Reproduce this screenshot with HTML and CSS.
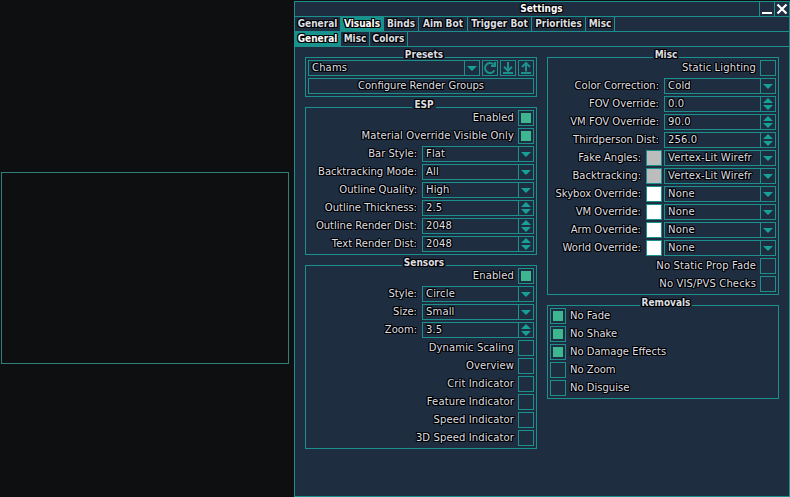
FILE: index.html
```
<!DOCTYPE html>
<html lang="en">
<head>
<meta charset="utf-8">
<title>Settings</title>
<link rel="stylesheet" href="styles.css">
</head>
<body>
<aside class="preview"><div class="preview-box"></div></aside>
<main class="window">
  <header class="titlebar">
    <h1 class="title">Settings</h1>
    <button class="win-btn"><svg viewBox="0 0 14 14"><path d="M2 11h10" stroke="#fff" stroke-width="2"/></svg></button>
    <button class="win-btn"><svg viewBox="0 0 14 14"><path d="M2.5 2.5l9 9M11.5 2.5l-9 9" stroke="#fff" stroke-width="2.2"/></svg></button>
  </header>
  <nav class="tabs main-tabs"><a>General</a><a class="active">Visuals</a><a>Binds</a><a>Aim Bot</a><a>Trigger Bot</a><a>Priorities</a><a>Misc</a></nav>
  <nav class="tabs sub-tabs"><a class="active">General</a><a>Misc</a><a>Colors</a></nav>
  <div class="columns">
    <div class="column">
      <section class="group">
        <h2>Presets</h2>
        <div class="row"><div class="field combo grow"><span>Chams</span><i></i></div>
          <button class="tool"><svg viewBox="0 0 14 14"><path d="M10.6 3.6A5 5 0 1 0 11.4 9.4M8 5h4V1" class="line"/></svg></button>
          <button class="tool"><svg viewBox="0 0 14 14"><path d="M7 1v8.500M3 5.800l4 4 4-4M2 12h10" class="line"/></svg></button>
          <button class="tool"><svg viewBox="0 0 14 14"><path d="M7 10.500V2M3 6l4-4 4 4M2 12h10" class="line"/></svg></button>
        </div>
        <button class="wide">Configure Render Groups</button>
      </section>
      <section class="group">
        <h2>ESP</h2>
        <div class="row toggle"><label>Enabled</label><b class="check on"></b></div>
        <div class="row toggle"><label>Material Override Visible Only</label><b class="check on"></b></div>
        <div class="row"><label>Bar Style:</label><div class="field combo"><span>Flat</span><i></i></div></div>
        <div class="row"><label>Backtracking Mode:</label><div class="field combo"><span>All</span><i></i></div></div>
        <div class="row"><label>Outline Quality:</label><div class="field combo"><span>High</span><i></i></div></div>
        <div class="row"><label>Outline Thickness:</label><div class="field spin"><span>2.5</span><i></i></div></div>
        <div class="row"><label>Outline Render Dist:</label><div class="field spin"><span>2048</span><i></i></div></div>
        <div class="row"><label>Text Render Dist:</label><div class="field spin"><span>2048</span><i></i></div></div>
      </section>
      <section class="group">
        <h2>Sensors</h2>
        <div class="row toggle"><label>Enabled</label><b class="check on"></b></div>
        <div class="row"><label>Style:</label><div class="field combo"><span>Circle</span><i></i></div></div>
        <div class="row"><label>Size:</label><div class="field combo"><span>Small</span><i></i></div></div>
        <div class="row"><label>Zoom:</label><div class="field spin"><span>3.5</span><i></i></div></div>
        <div class="row toggle"><label>Dynamic Scaling</label><b class="check"></b></div>
        <div class="row toggle"><label>Overview</label><b class="check"></b></div>
        <div class="row toggle"><label>Crit Indicator</label><b class="check"></b></div>
        <div class="row toggle"><label>Feature Indicator</label><b class="check"></b></div>
        <div class="row toggle"><label>Speed Indicator</label><b class="check"></b></div>
        <div class="row toggle"><label>3D Speed Indicator</label><b class="check"></b></div>
      </section>
    </div>
    <div class="column">
      <section class="group">
        <h2>Misc</h2>
        <div class="row toggle"><label>Static Lighting</label><b class="check"></b></div>
        <div class="row"><label>Color Correction:</label><div class="field combo"><span>Cold</span><i></i></div></div>
        <div class="row"><label>FOV Override:</label><div class="field spin"><span>0.0</span><i></i></div></div>
        <div class="row"><label>VM FOV Override:</label><div class="field spin"><span>90.0</span><i></i></div></div>
        <div class="row"><label>Thirdperson Dist:</label><div class="field spin"><span>256.0</span><i></i></div></div>
        <div class="row"><label>Fake Angles:</label><b class="swatch gray"></b><div class="field combo"><span>Vertex-Lit Wirefr</span><i></i></div></div>
        <div class="row"><label>Backtracking:</label><b class="swatch gray"></b><div class="field combo"><span>Vertex-Lit Wirefr</span><i></i></div></div>
        <div class="row"><label>Skybox Override:</label><b class="swatch"></b><div class="field combo"><span>None</span><i></i></div></div>
        <div class="row"><label>VM Override:</label><b class="swatch"></b><div class="field combo"><span>None</span><i></i></div></div>
        <div class="row"><label>Arm Override:</label><b class="swatch"></b><div class="field combo"><span>None</span><i></i></div></div>
        <div class="row"><label>World Override:</label><b class="swatch"></b><div class="field combo"><span>None</span><i></i></div></div>
        <div class="row toggle"><label>No Static Prop Fade</label><b class="check"></b></div>
        <div class="row toggle"><label>No VIS/PVS Checks</label><b class="check"></b></div>
      </section>
      <section class="group">
        <h2>Removals</h2>
        <div class="row left"><b class="check on"></b><label>No Fade</label></div>
        <div class="row left"><b class="check on"></b><label>No Shake</label></div>
        <div class="row left"><b class="check on"></b><label>No Damage Effects</label></div>
        <div class="row left"><b class="check"></b><label>No Zoom</label></div>
        <div class="row left"><b class="check"></b><label>No Disguise</label></div>
      </section>
    </div>
  </div>
</main>
</body>
</html>
```
FILE: styles.css
```
:root {
  --line: #1c908c;
  --bg: #1f2d40;
  --dark: #0d0f11;
}

* { box-sizing: border-box; }

body {
  margin: 0;
  width: 790px;
  height: 497px;
  overflow: hidden;
  display: flex;
  background: var(--dark);
  color: #dcdfe4;
  font: 10px/14px "DejaVu Sans", sans-serif;
  white-space: nowrap;
  text-shadow: 1px 0 #000, -1px 0 #000, 0 1px #000, 0 -1px #000, 1px 1px #000, -1px -1px #000, 1px -1px #000, -1px 1px #000;
}

button {
  margin: 0;
  padding: 0;
  background: none;
  border: 1px solid var(--line);
  color: inherit;
  font: inherit;
  text-shadow: inherit;
}

svg { display: block; width: 14px; height: 14px; fill: none; }
.line { stroke: var(--line); stroke-width: 2; }

.preview { width: 294px; padding: 172px 5px 0 1px; }
.preview-box { height: 192px; border: 1px solid #2f7f7c; }

.window {
  width: 496px;
  height: 496px;
  margin-top: 1px;
  border: 1px solid var(--line);
  background: var(--bg);
}

.titlebar {
  display: flex;
  height: 15px;
  border-bottom: 1px solid var(--line);
}

.title, .tabs, h2 { font: bold 10px/14px "DejaVu Sans Condensed", "DejaVu Sans", sans-serif; }
.title { flex: 1; margin: 0; padding-left: 29px; text-align: center; color: #fff; }
.win-btn { width: 15px; border-width: 0 0 0 1px; }

.tabs { display: flex; height: 15px; border-bottom: 1px solid var(--line); }
.tabs a { border-right: 1px solid var(--line); text-align: center; }
.tabs .active { background: #17928d; color: #fff; }
.main-tabs { display: grid; grid-template-columns: 46px 43px 35px 49px 64px 54px 29px; }
.sub-tabs { display: grid; grid-template-columns: 46px 29px 38px; }

.columns { display: flex; gap: 10px; padding: 10px; }
.column { display: flex; flex-direction: column; gap: 10px; width: 232px; }

.group {
  display: flex;
  flex-direction: column;
  gap: 2px;
  padding: 2px;
  border: 1px solid var(--line);
}

h2 {
  align-self: center;
  height: 14px;
  margin: -12px 0 -4px 6px;
  padding: 0 2px;
  background: var(--bg);
}

.row { display: flex; gap: 2px; height: 16px; line-height: 16px; }
.row label { flex: 1; text-align: right; padding-right: 3px; }
.row.toggle label { padding-right: 2px; letter-spacing: 0.12px; }
.row.left label { text-align: left; padding-left: 2px; }

.field {
  display: flex;
  width: 112px;
  height: 16px;
  border: 1px solid var(--line);
}
.field span { flex: 1; padding-left: 3px; line-height: 14px; letter-spacing: 0.15px; overflow: hidden; }
.field.grow { flex: 1; }
.field i {
  display: flex;
  flex-direction: column;
  align-items: center;
  justify-content: center;
  gap: 2px;
  width: 15px;
  border-left: 1px solid var(--line);
}
.combo i::after {
  content: "";
  margin-top: 1px;
  border: solid transparent;
  border-width: 5px 5px 0;
  border-top-color: #17a196;
}
.spin i::before, .spin i::after { content: ""; border: solid transparent; }
.spin i::before { border-width: 0 5px 5px; border-bottom-color: #17a196; }
.spin i::after { border-width: 5px 5px 0; border-top-color: #17a196; }

.tool { width: 16px; height: 16px; }
.wide { height: 16px; line-height: 14px; }

.check { width: 16px; height: 16px; padding: 2px; border: 1px solid var(--line); }
.check.on { background: #3eb68f content-box; }

.swatch { width: 16px; height: 16px; border: 1px solid var(--line); background: #fff; }
.swatch.gray { background: #bdbdbd; }
```
